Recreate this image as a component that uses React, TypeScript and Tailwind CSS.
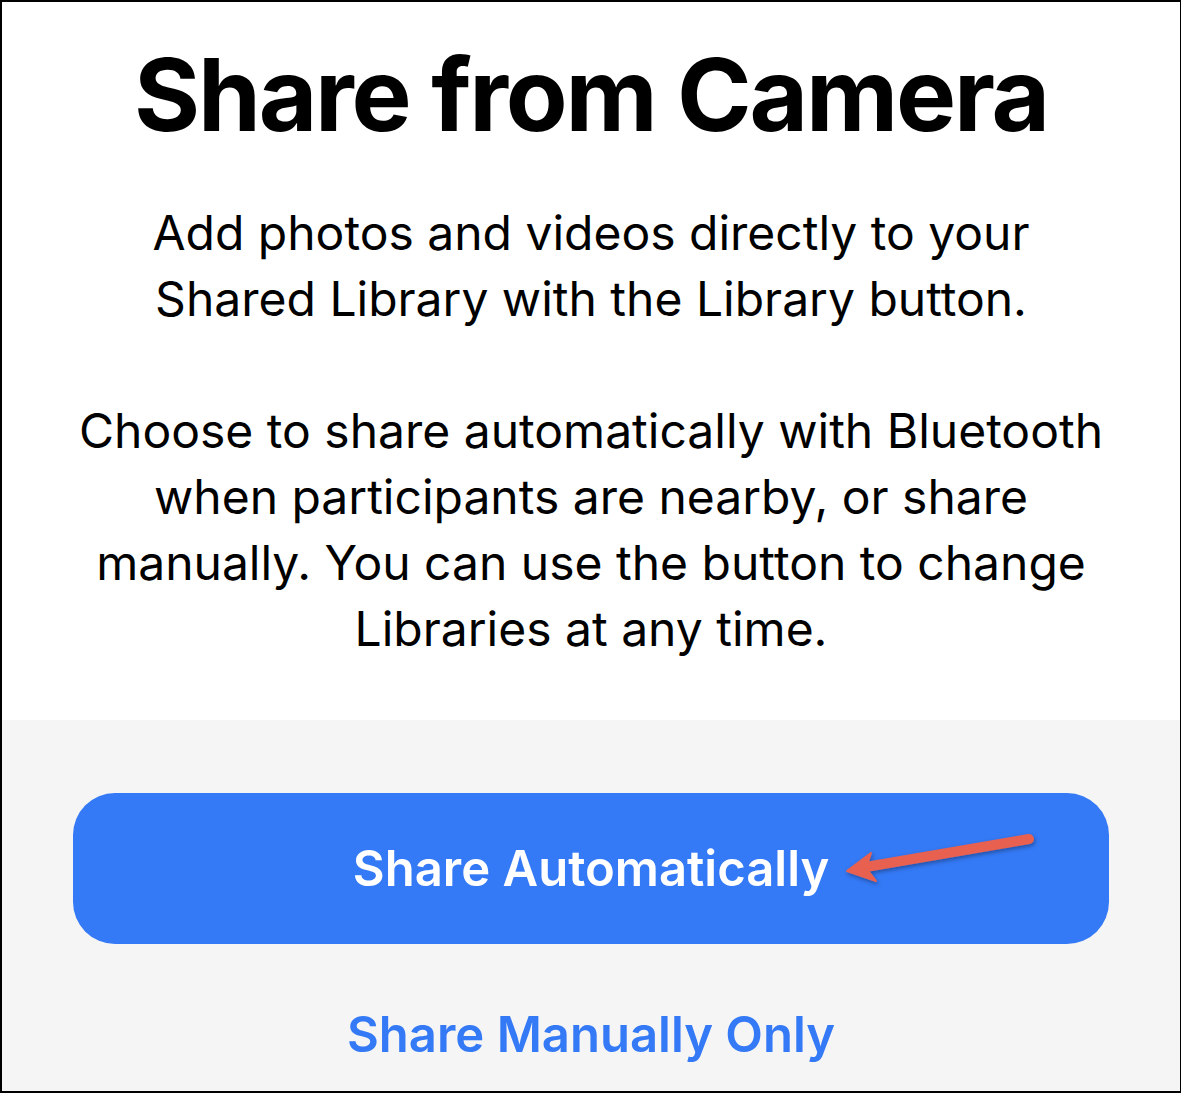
import React from "react";

const font = { fontFamily: "Inter, 'Noto Sans', sans-serif" };

// Red annotation arrow pointing at the primary button label
const Arrow = () => (
  <svg
    className="pointer-events-none absolute left-0 top-0"
    width="1181"
    height="1093"
    viewBox="0 0 1181 1093"
  >
    <defs>
      <filter id="shadow" x="-20%" y="-50%" width="140%" height="200%">
        <feDropShadow dx="1" dy="2" stdDeviation="2" floodColor="#000" floodOpacity="0.35" />
      </filter>
    </defs>
    <g filter="url(#shadow)" fill="#e8604f" stroke="#e8604f">
      <line x1="1027" y1="837" x2="858" y2="866" strokeWidth="10" strokeLinecap="round" />
      <polygon points="845,869 869,851 864,866 874,879" strokeWidth="2" strokeLinejoin="round" />
    </g>
  </svg>
);

export default function App() {
  return (
    <div
      className="relative flex h-[1093px] w-[1181px] flex-col overflow-hidden border-b-2 border-l-2 border-r border-t-2 border-black bg-white"
      style={font}
    >
      {/* Header + description */}
      <div className="flex flex-col items-center pb-[58px] pt-[42px] text-center text-black">
        <h1 className="text-[101px] font-bold leading-none tracking-[-2.2px]">Share from Camera</h1>
        <div className="mt-[55px] text-[48px] leading-[66px]">
          <p>
            Add photos and videos directly to your
            <br />
            Shared Library with the Library button.
          </p>
          <p className="mt-[66px]">
            Choose to share automatically with Bluetooth
            <br />
            when participants are nearby, or share
            <br />
            manually. You can use the button to change
            <br />
            Libraries at any time.
          </p>
        </div>
      </div>

      {/* Actions */}
      <div className="flex flex-1 flex-col items-center bg-[#f5f5f5] px-[71px] pt-[73px]">
        <button className="flex h-[151px] w-full items-center justify-center rounded-[42px] bg-[#3479f5] text-[49px] font-semibold text-white">
          Share Automatically
        </button>
        <button className="mt-[58px] text-[49px] font-semibold leading-[66px] text-[#3479f5]">
          Share Manually Only
        </button>
      </div>

      <Arrow />
    </div>
  );
}
